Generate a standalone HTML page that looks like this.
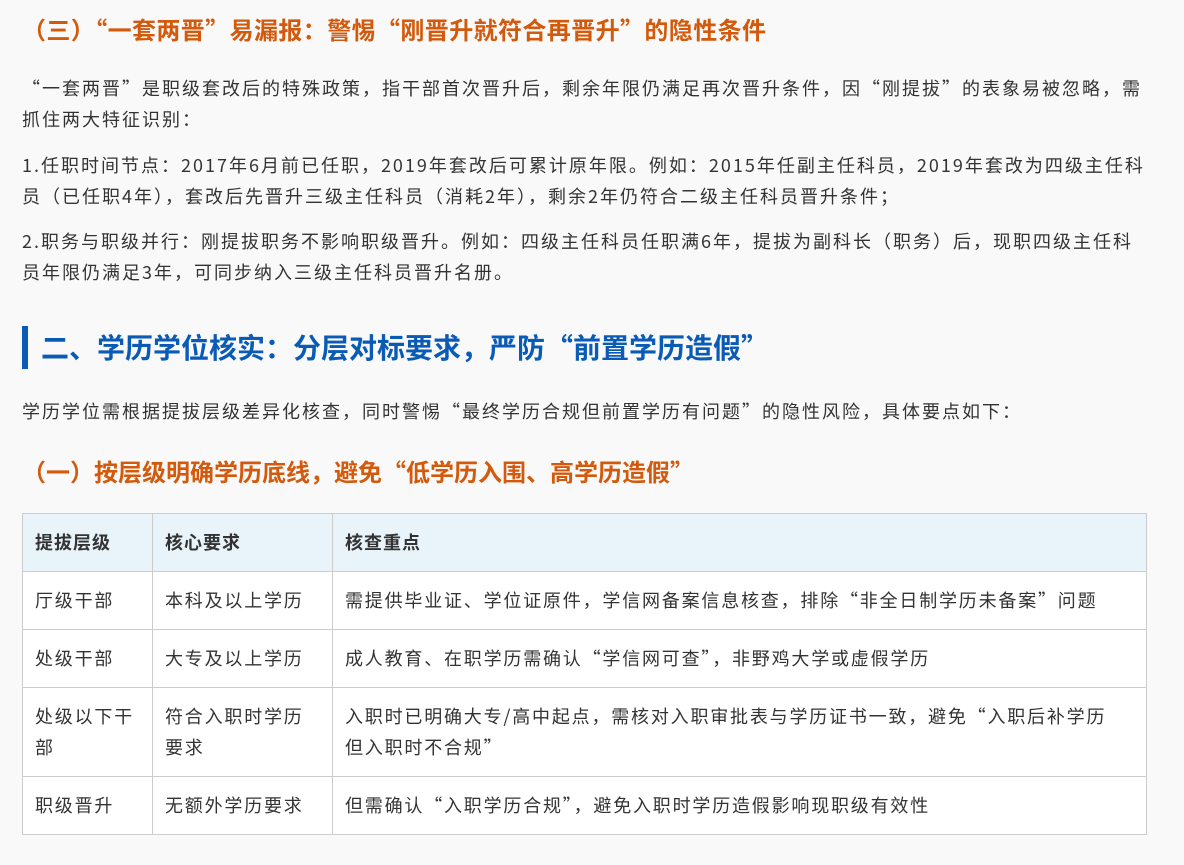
<!DOCTYPE html>
<html><head><meta charset="utf-8"><style>
body{margin:0;background:#f9f9f9;font-family:"Noto Sans CJK SC","Liberation Sans",sans-serif;color:#333;width:1184px;height:865px;overflow:hidden;position:relative}
.a{position:absolute;left:22px;white-space:nowrap}
.h3{color:#d35a0c;font-weight:bold;font-size:24px;line-height:30px}
p{margin:0;font-size:18px;line-height:31px;position:absolute;left:22px;width:1160px;white-space:nowrap;letter-spacing:2px}
.h2{left:22px;top:326px;height:43px;border-left:6px solid #0a5bb5;padding-left:13px;color:#0a5bb5;font-weight:bold;font-size:28px;line-height:43px}
table{position:absolute;left:22px;top:513px;width:1125px;border-collapse:collapse;background:#fff;font-size:18px}
td,th{border:1px solid #ccc;text-align:left;padding:0 12px;vertical-align:middle;line-height:31px;white-space:nowrap}
td{letter-spacing:1.8px}
th{background:#e8f4fa;height:57px;font-weight:bold;letter-spacing:1px}
td{height:57px}
</style></head><body>
<div class="a h3" style="top:14px;letter-spacing:0.4px">（三）“一套两晋”易漏报：警惕“刚晋升就符合再晋升”的隐性条件</div>
<p style="top:73px">“一套两晋”是职级套改后的特殊政策，指干部首次晋升后，剩余年限仍满足再次晋升条件，因“刚提拔”的表象易被忽略，需<br>抓住两大特征识别：</p>
<p style="top:150px">1.任职时间节点：2017年6月前已任职，2019年套改后可累计原年限。例如：2015年任副主任科员，2019年套改为四级主任科<br>员（已任职4年），套改后先晋升三级主任科员（消耗2年），剩余2年仍符合二级主任科员晋升条件；</p>
<p style="top:226px">2.职务与职级并行：刚提拔职务不影响职级晋升。例如：四级主任科员任职满6年，提拔为副科长（职务）后，现职四级主任科<br>员年限仍满足3年，可同步纳入三级主任科员晋升名册。</p>
<div class="a h2">二、学历学位核实：分层对标要求，严防“前置学历造假”</div>
<p style="top:396px">学历学位需根据提拔层级差异化核查，同时警惕“最终学历合规但前置学历有问题”的隐性风险，具体要点如下：</p>
<div class="a h3" style="top:456px">（一）按层级明确学历底线，避免“低学历入围、高学历造假”</div>
<table>
<tr><th style="width:105px">提拔层级</th><th style="width:155px">核心要求</th><th>核查重点</th></tr>
<tr><td>厅级干部</td><td>本科及以上学历</td><td>需提供毕业证、学位证原件，学信网备案信息核查，排除“非全日制学历未备案”问题</td></tr>
<tr><td>处级干部</td><td>大专及以上学历</td><td>成人教育、在职学历需确认“学信网可查”，非野鸡大学或虚假学历</td></tr>
<tr><td style="height:88px">处级以下干<br>部</td><td>符合入职时学历<br>要求</td><td>入职时已明确大专/高中起点，需核对入职审批表与学历证书一致，避免“入职后补学历<br>但入职时不合规”</td></tr>
<tr><td>职级晋升</td><td>无额外学历要求</td><td>但需确认“入职学历合规”，避免入职时学历造假影响现职级有效性</td></tr>
</table>
</body></html>
